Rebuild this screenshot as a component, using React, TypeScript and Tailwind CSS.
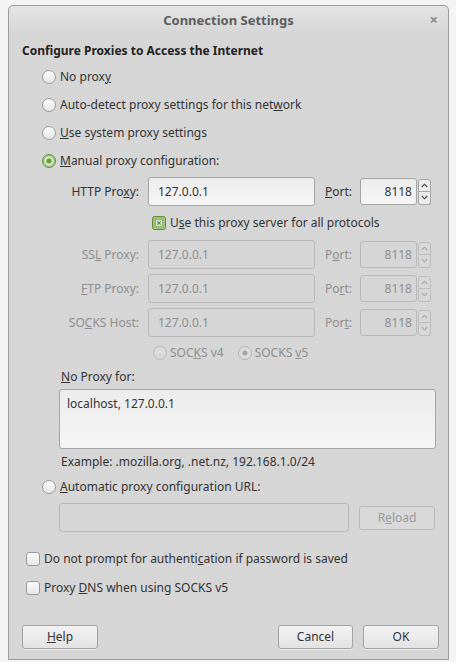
import React from "react";

const F = { fontFamily: '"Noto Sans", "Open Sans", sans-serif' };

function Radio({ checked = false, disabled = false }: { checked?: boolean; disabled?: boolean }) {
  if (checked && !disabled) {
    return (
      <svg width="14" height="14" viewBox="0 0 14 14" className="shrink-0">
        <circle cx="7" cy="7" r="6.5" fill="#a9cd88" stroke="#5f8f36" />
        <circle cx="7" cy="7" r="4.2" fill="#f4f4f4" />
        <circle cx="7" cy="7" r="2.8" fill="#6c9f3f" />
      </svg>
    );
  }
  if (checked && disabled) {
    return (
      <svg width="14" height="14" viewBox="0 0 14 14" className="shrink-0">
        <circle cx="7" cy="7" r="6.5" fill="#dcdcdc" stroke="#b3b3b3" />
        <circle cx="7" cy="7" r="2.5" fill="#a5a5a5" />
      </svg>
    );
  }
  return (
    <svg width="14" height="14" viewBox="0 0 14 14" className="shrink-0">
      <defs>
        <linearGradient id={disabled ? "rgd" : "rg"} x1="0" y1="0" x2="0" y2="1">
          <stop offset="0" stopColor={disabled ? "#dedede" : "#fbfbfb"} />
          <stop offset="1" stopColor={disabled ? "#d6d6d6" : "#e6e6e6"} />
        </linearGradient>
      </defs>
      <circle cx="7" cy="7" r="6.5" fill={`url(#${disabled ? "rgd" : "rg"})`} stroke={disabled ? "#b8b8b8" : "#9a9a9a"} />
    </svg>
  );
}

function Check({ checked = false }: { checked?: boolean }) {
  if (checked) {
    return (
      <svg width="14" height="14" viewBox="0 0 14 14" className="shrink-0">
        <rect x="0.5" y="0.5" width="13" height="13" rx="2" fill="#9fc47c" stroke="#5f8f36" />
        <rect x="3.5" y="3.5" width="7" height="7" fill="#f2f2f2" stroke="#7aa653" strokeWidth="0.8" />
        <path d="M5.2 5.2 L8.8 8.8 M8.8 5.2 L5.2 8.8" stroke="#5f8f36" strokeWidth="1.3" />
      </svg>
    );
  }
  return (
    <svg width="14" height="14" viewBox="0 0 14 14" className="shrink-0">
      <defs>
        <linearGradient id="cg" x1="0" y1="0" x2="0" y2="1">
          <stop offset="0" stopColor="#fbfbfb" />
          <stop offset="1" stopColor="#e6e6e6" />
        </linearGradient>
      </defs>
      <rect x="0.5" y="0.5" width="13" height="13" rx="2.5" fill="url(#cg)" stroke="#9a9a9a" />
    </svg>
  );
}

function Spin({ disabled = false }: { disabled?: boolean }) {
  const c = disabled ? "#a8a8a8" : "#444";
  const b = disabled ? "border-[#bcbcbc]" : "border-[#a5a5a5]";
  return (
    <div className="flex flex-col ml-[1px] h-[26px] w-[13px]">
      <div className={`h-[13px] border ${b} rounded-t-[3px] flex items-center justify-center ${disabled ? "bg-[#d8d8d8]" : "bg-[#ececec]"}`}>
        <svg width="7" height="5" viewBox="0 0 7 5"><path d="M0.8 4 L3.5 1.2 L6.2 4" fill="none" stroke={c} strokeWidth="1.1" /></svg>
      </div>
      <div className={`h-[13px] border border-t-0 ${b} rounded-b-[3px] flex items-center justify-center ${disabled ? "bg-[#d8d8d8]" : "bg-[#ececec]"}`}>
        <svg width="7" height="5" viewBox="0 0 7 5"><path d="M0.8 1 L3.5 3.8 L6.2 1" fill="none" stroke={c} strokeWidth="1.1" /></svg>
      </div>
    </div>
  );
}

function ProxyRow({
  label,
  port,
  disabled,
  mt,
}: {
  label: React.ReactNode;
  port: React.ReactNode;
  disabled?: boolean;
  mt: string;
}) {
  const txt = disabled ? "text-[#8e8e8e]" : "text-[#333333]";
  return (
    <div className={`flex items-center h-[29px] ${mt}`}>
      <div className={`w-[126px] text-right pr-[9px] ${txt}`}>{label}</div>
      <div
        className={`w-[167px] h-[29px] rounded-[3px] border flex items-center pl-[9px] ${
          disabled ? "border-[#b9b9b9] bg-[#d6d6d6] text-[#8e8e8e]" : "border-[#a5a5a5] bg-gradient-to-b from-[#ececec] to-[#f6f6f6] text-[#333333]"
        }`}
      >
        127.0.0.1
      </div>
      <div className={`ml-[10px] w-[35px] ${txt}`}>{port}</div>
      <div
        className={`w-[57px] h-[27px] rounded-[3px] border flex items-center justify-end pr-[4px] ${
          disabled ? "border-[#b9b9b9] bg-[#d6d6d6] text-[#8e8e8e]" : "border-[#a5a5a5] bg-gradient-to-b from-[#ececec] to-[#f6f6f6] text-[#333333]"
        }`}
      >
        8118
      </div>
      <Spin disabled={disabled} />
    </div>
  );
}

function Button({ children, className = "", disabled = false }: { children: React.ReactNode; className?: string; disabled?: boolean }) {
  return (
    <div
      className={`h-[24px] rounded-[3px] border flex items-center justify-center ${
        disabled
          ? "border-[#bababa] bg-[#d9d9d9] text-[#9a9a9a]"
          : "border-[#a3a3a3] bg-gradient-to-b from-[#f3f3f3] to-[#e2e2e2] text-[#333333] shadow-[0_1px_0_rgba(255,255,255,0.5)]"
      } ${className}`}
    >
      {children}
    </div>
  );
}

export default function App() {
  return (
    <div className="w-[456px] h-[662px] bg-[#f4f4f4] pt-[5px] pl-[8px] text-[12px] leading-[18px]" style={F}>
      <div className="w-[441px] h-[655px] border border-[#9b9b9b] rounded-t-[5px] bg-[#d6d6d6] flex flex-col text-[#333333]">
        <div className="h-[28px] shrink-0 rounded-t-[5px] bg-gradient-to-b from-[#e4e4e4] to-[#d6d6d6] relative flex items-center justify-center">
          <span className="font-bold text-[#5c5c5c] text-[13px]">Connection Settings</span>
          <span className="absolute right-[10px] top-[4px] text-[#8a8a8a] text-[15px] font-bold">×</span>
        </div>

        <div className="pl-[13px] flex flex-col">
          <div className="mt-[8px] h-[18px] font-bold text-[#222222]">Configure Proxies to Access the Internet</div>

          <div className="pl-[20px] flex flex-col">
            <div className="mt-[3px] h-[28px] flex items-center gap-[4px]">
              <Radio /> <span>No prox<u>y</u></span>
            </div>
            <div className="h-[28px] flex items-center gap-[4px]">
              <Radio /> <span>Auto-detect proxy settings for this net<u>w</u>ork</span>
            </div>
            <div className="h-[28px] flex items-center gap-[4px]">
              <Radio /> <span><u>U</u>se system proxy settings</span>
            </div>
            <div className="h-[28px] flex items-center gap-[4px]">
              <Radio checked /> <span><u>M</u>anual proxy configuration:</span>
            </div>
          </div>

          <div className="flex flex-col">
            <ProxyRow mt="mt-[2px]" label={<>HTTP Pro<u>x</u>y:</>} port={<><u>P</u>ort:</>} />
            <div className="mt-[7px] h-[20px] flex items-center gap-[4px] pl-[130px]">
              <Check checked /> <span>U<u>s</u>e this proxy server for all protocols</span>
            </div>
            <ProxyRow mt="mt-[7px]" disabled label={<>SS<u>L</u> Proxy:</>} port={<>P<u>o</u>rt:</>} />
            <ProxyRow mt="mt-[5px]" disabled label={<><u>F</u>TP Proxy:</>} port={<>Po<u>r</u>t:</>} />
            <ProxyRow mt="mt-[5px]" disabled label={<>SO<u>C</u>KS Host:</>} port={<>Por<u>t</u>:</>} />
            <div className="mt-[6px] h-[20px] flex items-center pl-[131px] text-[#8e8e8e]">
              <Radio disabled />
              <span className="ml-[3px]">SOC<u>K</u>S v4</span>
              <span className="ml-[14px] flex"><Radio disabled checked /></span>
              <span className="ml-[3px]">SOCKS <u>v</u>5</span>
            </div>
          </div>

          <div className="pl-[37px] flex flex-col">
            <div className="mt-[4px] h-[20px] flex items-center pl-[2px]"><span><u>N</u>o Proxy for:</span></div>
            <div className="mt-[2px] w-[377px] h-[60px] rounded-[3px] border border-[#a5a5a5] bg-gradient-to-b from-[#ececec] to-[#f5f5f5] pl-[7px] pt-[5px]">
              localhost, 127.0.0.1
            </div>
            <div className="mt-[3px] h-[20px] flex items-center pl-[2px]">Example: .mozilla.org, .net.nz, 192.168.1.0/24</div>
          </div>

          <div className="pl-[20px] flex flex-col">
            <div className="mt-[5px] h-[20px] flex items-center gap-[4px]">
              <Radio /> <span><u>A</u>utomatic proxy configuration URL:</span>
            </div>
            <div className="mt-[6px] flex items-center pl-[17px]">
              <div className="w-[290px] h-[29px] rounded-[3px] border border-[#b9b9b9] bg-[#d6d6d6]" />
              <Button disabled className="ml-[10px] w-[76px]">R<u>e</u>load</Button>
            </div>
          </div>

          <div className="pl-[4px] flex flex-col">
            <div className="mt-[17px] h-[20px] flex items-center gap-[4px]">
              <Check /> <span>Do not prompt for authenti<u>c</u>ation if password is saved</span>
            </div>
            <div className="mt-[9px] h-[20px] flex items-center gap-[4px]">
              <Check /> <span>Proxy <u>D</u>NS when using SOCKS v5</span>
            </div>
          </div>

          <div className="mt-[27px] flex items-center">
            <Button className="w-[76px]"><span><u>H</u>elp</span></Button>
            <div className="flex-1" />
            <Button className="w-[75px]">Cancel</Button>
            <Button className="w-[76px] ml-[10px] mr-[9px]">OK</Button>
          </div>
        </div>
      </div>
    </div>
  );
}
